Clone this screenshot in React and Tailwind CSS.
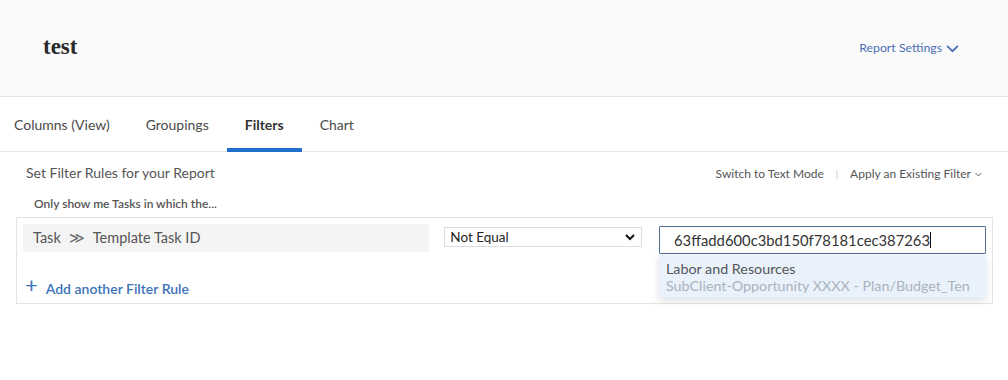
import React from 'react';

// Report editor — Filters tab with an open typeahead under the value input
const TABS = ['Columns (View)', 'Groupings', 'Filters', 'Chart'];

const Chevron = ({ className }) => (
  <svg viewBox="0 0 12 8" className={className} fill="none" stroke="currentColor" strokeWidth="1.6">
    <path d="M1 1.5l5 5 5-5" />
  </svg>
);

export default function App() {
  return (
    <div className="w-[1008px] h-[380px] bg-white overflow-hidden font-['Lato','Open_Sans',sans-serif] text-[#444]">
      {/* header */}
      <div className="h-[97px] bg-[#fafafa] border-b border-[#e4e4e4] flex items-center justify-between pl-[43px] pr-[49px]">
        <div className="font-['Liberation_Serif',serif] font-bold text-[23px] text-[#2a2a2a] -mt-[2px]">test</div>
        <div className="flex items-center gap-[4px] text-[12.3px] text-[#4a6fb5]">
          Report Settings
          <Chevron className="w-[13px] h-[9px]" />
        </div>
      </div>

      {/* tabs */}
      <div className="h-[55px] border-b border-[#e6e6e6] flex items-stretch">
        {TABS.map((t, i) => (
          <div
            key={t}
            className={`relative flex items-center text-[14px] ${i === 0 ? 'pl-[14px] pr-[18px]' : 'px-[18px]'} ${t === 'Filters' ? 'font-bold text-[#333]' : 'text-[#4a4a4a]'}`}
          >
            {t}
            {t === 'Filters' && <div className="absolute left-0 right-0 -bottom-px h-[4px] bg-[#1f6fcc]" />}
          </div>
        ))}
      </div>

      {/* filter editor */}
      <div className="pl-[16px] pr-[15px]">
        <div className="flex items-center justify-between h-[40px] pl-[10px] pr-[11px] pt-[1px]">
          <div className="text-[14px] text-[#555]">Set Filter Rules for your Report</div>
          <div className="flex items-center text-[12px] text-[#555] pt-[2px]">
            <span>Switch to Text Mode</span>
            <span className="mx-[12px] text-[#bbb] text-[9px]">|</span>
            <span>Apply an Existing Filter</span>
            <Chevron className="w-[7px] h-[5px] ml-[4px] mt-[1px]" />
          </div>
        </div>
        <div className="h-[25px] flex items-center pl-[18px] text-[12px] font-semibold text-[#555] -mt-[1px]">
          Only show me Tasks in which the...
        </div>
        <div className="relative border border-[#e4e4e4] h-[87px] mt-[1px] p-[6px]">
          <div className="flex items-start">
            <div className="w-[407px] h-[28px] bg-[#f4f4f4] flex items-center pl-[10px] text-[14.5px] text-[#555]">
              Task
              <span className="mx-[8px] text-[15px] text-[#666] -mt-[2px]">≫</span>
              Template Task ID
            </div>
            <div className="ml-[15px] mt-[3px] w-[198px] h-[20px] border border-[#ddd] bg-white flex items-center justify-between pl-[5px] pr-[6px] text-[13.5px] text-[#222]">
              Not Equal
              <svg viewBox="0 0 10 7" className="w-[10px] h-[7px]" fill="none" stroke="#111" strokeWidth="2">
                <path d="M1 1l4 4 4-4" />
              </svg>
            </div>
            <div className="relative ml-[17px] mt-[2px]">
              <div className="w-[327px] h-[28px] border border-[#4d6d93] rounded-[1px] bg-white flex items-center pl-[14px] text-[14.8px] text-[#333]">
                63ffadd600c3bd150f78181cec387263
                <span className="w-px h-[16px] bg-[#111]" />
              </div>
              <div className="absolute left-0 top-[29px] w-[327px] h-[43px] bg-[#e9f1fb] shadow-[0_3px_8px_rgba(0,0,0,0.12)] pl-[7px] pt-[5px] leading-[17px]">
                <div className="text-[14.3px] text-[#555]">Labor and Resources</div>
                <div className="text-[14.3px] text-[#aab3bd] whitespace-nowrap overflow-hidden">SubClient-Opportunity XXXX - Plan/Budget_Ten</div>
              </div>
            </div>
          </div>
          <div className="flex items-center mt-[24px] ml-[2px] text-[#3b73b9]">
            <span className="text-[22px] leading-none -mt-[8px]">+</span>
            <span className="ml-[8px] text-[14px] font-semibold">Add another Filter Rule</span>
          </div>
        </div>
      </div>
    </div>
  );
}
